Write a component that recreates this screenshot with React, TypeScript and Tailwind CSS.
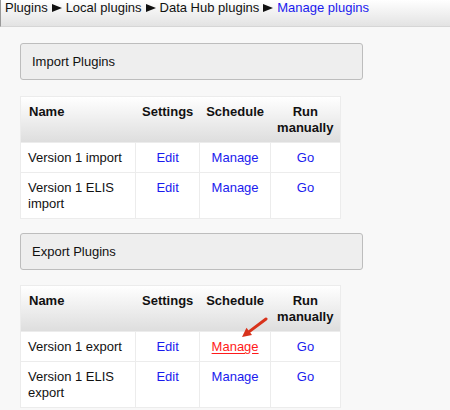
import React from "react";

const rows = {
  import: [
    { name: "Version 1 import", manage: "normal" },
    { name: "Version 1 ELIS import", manage: "normal" },
  ],
  export: [
    { name: "Version 1 export", manage: "red" },
    { name: "Version 1 ELIS export", manage: "normal" },
  ],
};

function Arrow() {
  return (
    <svg className="absolute left-[28px] top-[-22px]" width="30" height="24" viewBox="0 0 30 24">
      <path d="M26 2 L9.5 14.4" stroke="#d8321b" strokeWidth="3" strokeLinecap="round" />
      <path d="M2 20 L12 18 L6.5 10.8 Z" fill="#d8321b" />
    </svg>
  );
}

function Sep() {
  return (
    <span className="mx-[4px] inline-block h-0 w-0 border-y-[4.5px] border-l-[10px] border-y-transparent border-l-[#111] align-[0px]" />
  );
}

function PluginTable({ items }: { items: { name: string; manage: string }[] }) {
  return (
    <table className="w-[321px] border-collapse border border-[#ececec] bg-white text-[13px] leading-[16px]">
      <colgroup>
        <col className="w-[116px]" />
        <col className="w-[64px]" />
        <col className="w-[71px]" />
        <col className="w-[70px]" />
      </colgroup>
      <thead>
        <tr className="bg-gradient-to-b from-white to-[#dddddd]">
          <th className="px-2 pt-[7px] pb-[6px] text-left align-top font-bold text-[#111]">Name</th>
          <th className="px-1 pt-[7px] pb-[6px] text-center align-top font-bold text-[#111]">Settings</th>
          <th className="px-1 pt-[7px] pb-[6px] text-center align-top font-bold text-[#111]">Schedule</th>
          <th className="px-1 pt-[7px] pb-[6px] text-center align-top font-bold text-[#111]">
            Run
            <br />
            manually
          </th>
        </tr>
      </thead>
      <tbody>
        {items.map((item) => (
          <tr key={item.name}>
            <td className="border border-[#ececec] px-[7px] pt-[7px] pb-[6px] align-top text-[#111]">
              {item.name.includes("ELIS") ? (
                <>
                  Version 1 ELIS
                  <br />
                  {item.name.endsWith("import") ? "import" : "export"}
                </>
              ) : (
                item.name
              )}
            </td>
            <td className="border border-[#ececec] pt-[7px] pb-[6px] text-center align-top text-[#1a1aee]">Edit</td>
            <td className="border border-[#ececec] pt-[7px] pb-[6px] text-center align-top">
              {item.manage === "red" ? (
                <span className="relative text-[#ff1a1a] underline underline-offset-2">
                  Manage
                  <Arrow />
                </span>
              ) : (
                <span className="text-[#1a1aee]">Manage</span>
              )}
            </td>
            <td className="border border-[#ececec] pt-[7px] pb-[6px] text-center align-top text-[#1a1aee]">Go</td>
          </tr>
        ))}
      </tbody>
    </table>
  );
}

function SectionBox({ title }: { title: string }) {
  return (
    <div className="flex h-[37px] w-[343px] items-center rounded-[3px] border border-[#bdbdbd] bg-[#eeeeee] pl-[11px] text-[13px] text-[#111]">
      {title}
    </div>
  );
}

export default function App() {
  return (
    <div className="h-[410px] w-[450px] overflow-hidden bg-[#f8f8f8]" style={{ fontFamily: '"Liberation Sans", Arial, sans-serif' }}>
      {/* breadcrumb */}
      <div className="h-[27px] border-l border-[#999] border-b border-b-[#d6d6d6] bg-gradient-to-b from-white to-[#e3e3e3] pl-[4px] text-[13px] leading-[16px] text-[#111]">
        <span>Plugins</span>
        <Sep />
        <span>Local plugins</span>
        <Sep />
        <span>Data Hub plugins</span>
        <Sep />
        <span className="text-[#1a1aee]">Manage plugins</span>
      </div>

      <div className="pl-[20px]">
        <div className="mt-[16px]">
          <SectionBox title="Import Plugins" />
        </div>
        <div className="mt-[16px]">
          <PluginTable items={rows.import} />
        </div>
        <div className="mt-[14px]">
          <SectionBox title="Export Plugins" />
        </div>
        <div className="mt-[15px]">
          <PluginTable items={rows.export} />
        </div>
      </div>
    </div>
  );
}
